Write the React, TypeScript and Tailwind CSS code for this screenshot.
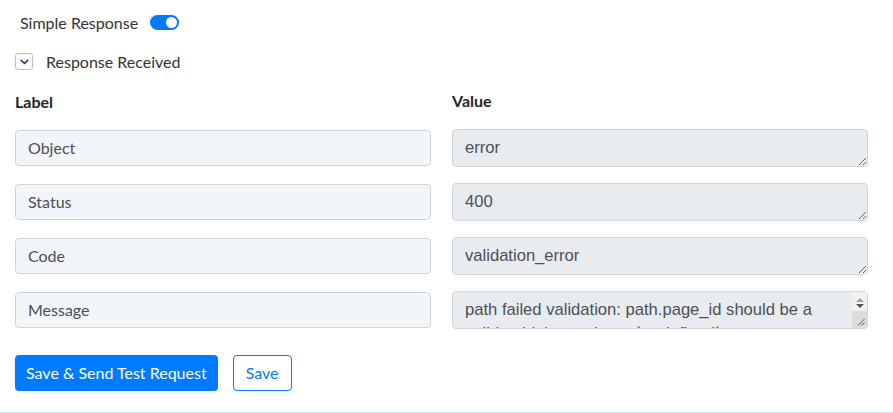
import React from 'react';

// Response mapping panel: a toggle, a collapsible header and label/value rows
const rows: { label: string; value: string }[] = [
  { label: 'Object', value: 'error' },
  { label: 'Status', value: '400' },
  { label: 'Code', value: 'validation_error' },
  {
    label: 'Message',
    value:
      'path failed validation: path.page_id should be a valid uuid, instead was `undefined`.',
  },
];

function Toggle({ on }: { on: boolean }) {
  return (
    <span
      className={`inline-flex h-[15px] w-[29px] items-center rounded-full px-[2px] ${
        on ? 'justify-end bg-[#007bff]' : 'justify-start bg-gray-300'
      }`}
    >
      <span className="h-[11px] w-[11px] rounded-full bg-white" />
    </span>
  );
}

// classic scrollbar drawn beside a textarea whose text overflows
function FakeScrollbar() {
  return (
    <div className="pointer-events-none absolute bottom-[1px] right-[1px] top-[1px] flex w-[15px] flex-col bg-[#f1f1f1]">
      <div className="flex h-[10px] items-end justify-center">
        <span className="h-0 w-0 border-x-[4px] border-b-[4px] border-x-transparent border-b-[#a3a3a3]" />
      </div>
      <div className="flex h-[9px] items-start justify-center pt-[2px]">
        <span className="h-0 w-0 border-x-[4px] border-t-[4px] border-x-transparent border-t-[#505050]" />
      </div>
      <div className="flex flex-1 items-end justify-end bg-[#dcdcdc] pb-[2px] pr-[2px]">
        <svg width="8" height="8" viewBox="0 0 8 8">
          <path d="M7.5 1 1 7.5M7.5 4.5 4.5 7.5" stroke="#555" strokeWidth="1" />
        </svg>
      </div>
    </div>
  );
}

export default function App() {
  return (
    <div className="min-h-[413px] w-full border-b border-[#d3e2f3] bg-white font-['Lato',sans-serif] text-[16px] text-[#212529]">
      <div className="px-[15px]">
        <div className="flex h-[44px] items-center gap-[12px] pl-[5px] pt-[1px]">
          <span className="text-[#333]">Simple Response</span>
          <Toggle on />
        </div>

        <div className="flex h-[35px] items-center gap-[13px]">
          <span className="flex h-[17px] w-[18px] items-center justify-center rounded-[3px] border border-[#b9bec4] bg-white">
            <svg width="9" height="6" viewBox="0 0 9 6" fill="none">
              <path d="M1.2 1.2 4.5 4.5 7.8 1.2" stroke="#1f3a5f" strokeWidth="1.6" strokeLinecap="round" strokeLinejoin="round" />
            </svg>
          </span>
          <span className="text-[#333]">Response Received</span>
        </div>

        <div className="mt-[11px] flex gap-[21px]">
          <div className="flex w-[416px] flex-col gap-[18px]">
            <div className="-mb-[2px] h-[24px] font-bold leading-[24px]">Label</div>
            {rows.map((r) => (
              <div
                key={r.label}
                className="flex h-[36px] items-center rounded-[4px] border border-[#ced4da] bg-[#f3f6f9] px-[12px] text-[#495057]"
              >
                {r.label}
              </div>
            ))}
          </div>

          <div className="flex w-[416px] flex-col gap-[16px]">
            <div className="-mt-[1px] h-[24px] font-bold leading-[24px]">Value</div>
            {rows.map((r) => {
              const long = r.value.length > 40;
              return (
                <div key={r.label} className="relative h-[38px]">
                  <textarea
                    readOnly
                    value={r.value}
                    className={`block h-[38px] w-full resize-y overflow-hidden rounded-[4px] border border-[#ced4da] bg-[#e9ecef] pl-[12px] pt-[6px] font-['Liberation_Sans',Arial,sans-serif] text-[16.6px] leading-[24px] text-[#495057] outline-none ${
                      long ? 'pr-[28px]' : 'pr-[12px]'
                    }`}
                  />
                  {long && <FakeScrollbar />}
                </div>
              );
            })}
          </div>
        </div>

        <div className="mt-[26px] flex items-center gap-[15px]">
          <button className="h-[36px] rounded-[4px] bg-[#007bff] px-[11px] text-white">
            Save &amp; Send Test Request
          </button>
          <button className="h-[36px] rounded-[4px] border border-[#007bff] bg-white px-[12px] text-[#007bff]">
            Save
          </button>
        </div>
      </div>
    </div>
  );
}
